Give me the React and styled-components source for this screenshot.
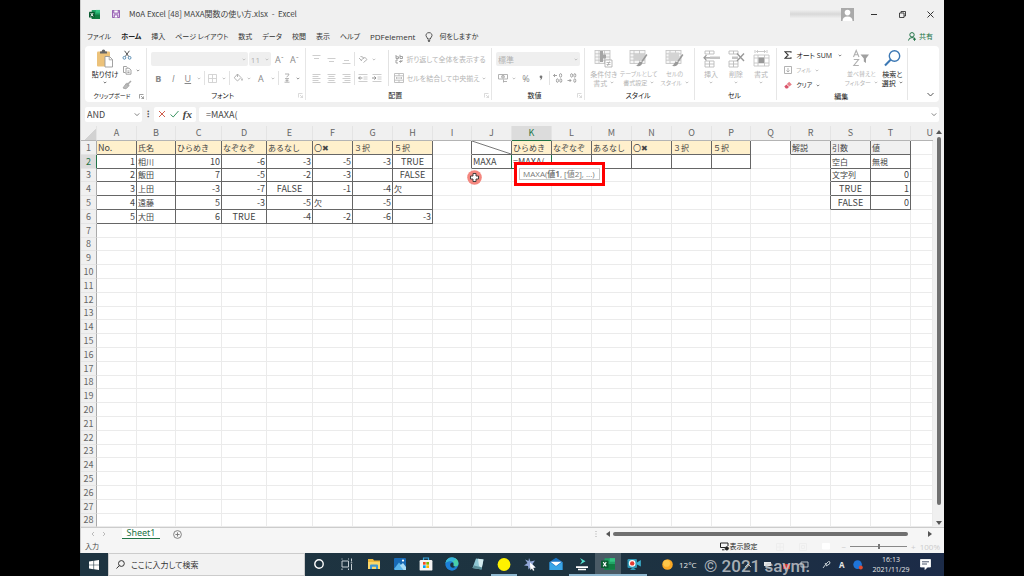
import React from "react"
import styled, { createGlobalStyle, css } from "styled-components"

const GlobalStyle = createGlobalStyle`
  * { box-sizing: border-box; }
  body {
    margin: 0;
    background: #000;
    font-family: "Open Sans", "Noto Sans CJK JP", sans-serif;
    font-size: 8px;
    line-height: 12px;
    color: #444;
    font-feature-settings: "palt";
  }
  button, input, select {
    font: inherit;
    font-feature-settings: inherit;
    color: inherit;
    background: none;
    border: 0;
    padding: 0;
    margin: 0;
  }
  svg { display: block; flex: none; }
`

const Screen = styled.div`
  min-height: 100vh;
  padding: 0 80px;
  display: flex;
  flex-direction: column;
  overflow: hidden;
`

const Window = styled.div`
  flex: 1;
  display: flex;
  flex-direction: column;
  background: #f0f0f0;
  border-left: 1px solid #ccc;
`

/* title bar */

const TitleBar = styled.header`
  display: flex;
  align-items: center;
  height: 28px;
  padding-left: 8px;
`

const SaveButton = styled.button`
  margin: 0 9px 0 12px;
`

const Title = styled.h1`
  margin: 0 auto 0 0;
  font-family: "Noto Sans CJK JP", sans-serif;
  font-size: 8px;
  font-weight: 400;
  white-space: pre;
`

const Account = styled.div`
  display: flex;
  align-items: center;
  margin-right: 6px;
`

const AccountName = styled.div`
  width: 51px;
  height: 8px;
  background: linear-gradient(#eee, #d8d8d8 50%, #eee);
`

const WindowButton = styled.button`
  display: flex;
  justify-content: center;
  align-items: center;
  width: 28px;
  height: 20px;
`

/* ribbon tabs */

const Tabs = styled.nav`
  display: flex;
  align-items: center;
  gap: 10px;
  height: 17px;
  padding: 0 11px 0 6px;
`

const Tab = styled.button`
  display: flex;
  align-items: center;
  gap: 6px;
  white-space: nowrap;
  font-size: ${p => (p.$latin ? 8 : 7)}px;
  font-weight: ${p => (p.$active ? 700 : 400)};
  color: ${p => (p.$active ? "#222" : "#333")};
`

const ShareButton = styled(Tab)`
  margin-left: auto;
  gap: 3px;
  color: #217346;
`

/* ribbon */

const Ribbon = styled.section`
  display: flex;
  height: 56px;
  margin: 1px 5px 0 4px;
  padding-top: 2px;
  background: #fff;
  border-radius: 4px;
  font-size: 7px;
  line-height: 9px;
`

const Group = styled.div`
  flex: ${p => p.$w} 1 ${p => p.$w}px;
  min-width: 0;
  display: flex;
  flex-direction: column;
  border-right: 1px solid #e6e6e6;
  margin-bottom: 2px;
`

const GroupBody = styled.div`
  flex: 1;
  display: flex;
  padding: 0 0 0 ${p => p.$pad || 4}px;
`

const GroupLabel = styled.div`
  display: flex;
  align-items: center;
  height: 10px;
  padding-right: 2px;
  font-size: ${p => (p.$small ? 6 : 7)}px;
  color: #222;

  span {
    flex: 1;
    text-align: center;
    white-space: nowrap;
  }
`

const ToolRows = styled.div`
  display: flex;
  flex-direction: column;
  gap: ${p => (p.$tight ? 1 : 5)}px;
  padding-top: ${p => (p.$tight ? 0 : 4)}px;
`

const ToolRow = styled.div`
  display: flex;
  align-items: center;
  height: 14px;
`

const Tool = styled.button`
  display: flex;
  align-items: center;
  justify-content: center;
  width: ${p => p.$w || 14}px;
  height: 14px;
  font-size: 9px;
  color: #888;
`

const TextTool = styled.button`
  display: flex;
  align-items: center;
  gap: ${p => (p.$wide ? 2 : 4)}px;
  height: 14px;
  white-space: nowrap;
  font-size: ${p => (p.$small ? 6 : 7)}px;
  color: ${p => (p.$on ? "#222" : "#b5b5b5")};
`

const CaretBox = styled.span`
  display: flex;
  justify-content: center;
  width: 8px;
`

const Divider = styled.span`
  width: 1px;
  height: 14px;
  margin: 0 1px;
  background: #e2e2e2;
`

const TallDivider = styled(Divider)`
  height: 36px;
  margin: 2px 2px 0 4px;
`

const SelectBox = styled.span`
  display: flex;
  align-items: center;
  width: ${p => p.$w}px;
  height: 14px;
  margin-right: 1px;
  background: #efefef;
  border-radius: 2px;

  select {
    flex: 1;
    min-width: 0;
    height: 14px;
    padding-left: 2px;
    appearance: none;
    color: #b0b0b0;
    font-size: 8px;
  }
`

const BigTool = styled.button`
  display: flex;
  flex-direction: column;
  align-items: center;
  width: ${p => p.$w}px;
  white-space: nowrap;
  padding-top: 1px;
  font-size: ${p => (p.$small ? 6 : 7)}px;
  color: ${p => (p.$on ? "#222" : "#b5b5b5")};

  svg:first-child { margin-bottom: 2px; }

  span {
    display: flex;
    align-items: center;
    justify-content: center;
    gap: 3px;
    height: 9px;
  }
`

const CollapseButton = styled.button`
  display: flex;
  justify-content: flex-end;
  align-items: flex-end;
  flex: none;
  width: 31px;
  padding: 0 4px 5px 0;
`

/* formula bar */

const FormulaBar = styled.div`
  display: flex;
  align-items: center;
  height: 24px;
  padding: 0 5px 0 4px;
  font-family: "Noto Sans CJK JP", sans-serif;
  font-size: 9px;
`

const Field = styled.div`
  display: flex;
  align-items: center;
  height: 15px;
  padding: 0 2px;
  background: #fff;
  border-radius: 2px;
  ${p => (p.$w ? `width: ${p.$w}px;` : "flex: 1;")}

  input {
    flex: 1;
    min-width: 0;
    height: 15px;
    padding-left: ${p => (p.$w ? 0 : 5)}px;
  }
`

const FormulaActions = styled(Field)`
  justify-content: space-around;
  margin-right: 3px;
`

const Grip = styled.span`
  width: 12px;
  text-align: center;
  font-weight: 700;
`

const Fx = styled.i`
  font-family: "Liberation Serif", serif;
  font-size: 11px;
  font-weight: 700;
`

/* sheet */

const SheetArea = styled.main`
  position: relative;
  display: flex;
  font-family: "Noto Sans CJK JP", sans-serif;
  font-feature-settings: normal;
`

const Sheet = styled.table`
  flex: 1;
  min-width: 0;
  table-layout: fixed;
  border-spacing: 0;
  background: #fff;
  font-size: 9px;
  line-height: 12px;

  tbody tr { height: 14px; }
  tbody tr:nth-child(5n + 3) { height: 13px; }
`

const ColHead = styled.th`
  height: 15px;
  padding: 0;
  font-weight: 400;
  color: ${p => (p.$active ? "#217346" : "#666")};
  background: ${p => (p.$active ? "#dcdcdc" : "#f0f0f0")};
  border-right: 1px solid #e4e4e4;
  border-bottom: 1px solid ${p => (p.$active ? "#217346" : "#b4b4b4")};

  &:last-child {
    text-align: right;
    border-right: 0;
  }
`

const Corner = styled(ColHead)`
  background: linear-gradient(to bottom right, #f0f0f0 60%, #d2d2d2 61%);
`

const RowHead = styled.th`
  padding: 0;
  font-weight: 400;
  color: ${p => (p.$active ? "#217346" : "#666")};
  background: ${p => (p.$active ? "#dcdcdc" : "#f0f0f0")};
  border-right: 1px solid ${p => (p.$active ? "#217346" : "#aaa")};
  border-bottom: 1px solid #e4e4e4;
`

const DARK = "#666"
const LIGHT = "#ebebeb"

const Cell = styled.td`
  position: relative;
  padding: 0 1px;
  white-space: nowrap;
  text-align: ${p => p.$align};
  font-size: ${p => (p.$kana ? 8 : 9)}px;
  background: ${p => p.$fill};
  border-right: 1px solid ${p => (p.$right ? DARK : LIGHT)};
  border-bottom: 1px solid ${p => (p.$bottom ? DARK : LIGHT)};
  ${p =>
    p.$active &&
    css`
      box-shadow: -1px 0 0 #217346;
      border-color: #217346;
    `}
`

const Diagonal = styled.svg`
  position: absolute;
  inset: 0;
  width: 100%;
  height: 100%;
`

const HintFrame = styled.div`
  position: absolute;
  left: 2px;
  top: 7px;
  z-index: 2;
  width: 91px;
  height: 24px;
  padding: 3px 2px;
  background: #fff;
  border: 3px solid #f00;
`

const Hint = styled.div`
  height: 12px;
  padding-left: 3px;
  border: 1px solid #c8c8c8;
  font-family: "Open Sans", "Noto Sans CJK JP", sans-serif;
  font-size: 8px;
  line-height: 10px;
  text-align: left;
  color: #777;
  font-feature-settings: "palt";
`

const Pointer = styled.div`
  position: absolute;
  left: 386px;
  top: 44px;
`

const VScroll = styled.div`
  display: flex;
  flex-direction: column;
  align-items: center;
  gap: 2px;
  width: 11px;
  padding: 3px 0 1px;

  i {
    width: 4px;
    height: 368px;
    margin-bottom: auto;
    border-radius: 2px;
    background: #707070;
  }
`

/* bottom bars */

const SheetTabs = styled.div`
  display: flex;
  align-items: center;
  height: 13px;
  padding: 0 11px 0 9px;
  background: #f6f6f6;
  border-top: 1px solid #ccc;
`

const SheetTab = styled.button`
  align-self: flex-start;
  width: 38px;
  height: 11px;
  margin: 0 13px 0 14px;
  line-height: 10px;
  font-family: "Noto Sans", sans-serif;
  font-size: 9px;
  color: #217346;
  background: #fff;
  border-bottom: 1px solid #217346;
`

const HScroll = styled.div`
  flex: none;
  display: flex;
  align-items: center;
  width: 338px;
  margin-left: auto;

  i {
    flex: 1;
    height: 4px;
    margin: 0 19px 0 2px;
    border-radius: 2px;
    background: #707070;
  }
`

const StatusBar = styled.footer`
  display: flex;
  align-items: center;
  flex: 1;
  min-height: 12px;
  padding: 0 4px;
  background: #f5f5f5;

  > span:first-child {
    margin-right: auto;
    font-size: 7px;
  }
`

const DisplaySettings = styled.button`
  display: flex;
  align-items: center;
  gap: 1px;
  font-size: 7px;
  color: #222;
`

const Views = styled.div`
  display: flex;
  justify-content: center;
  gap: 15px;
  width: 84px;
  padding-left: 6px;
`

const Zoom = styled.div`
  display: flex;
  align-items: center;
  gap: 4px;
  color: #ccc;

  input {
    appearance: none;
    width: 57px;
    height: 1px;
    background: #888;
  }
  input::-webkit-slider-thumb {
    appearance: none;
    width: 2px;
    height: 5px;
    background: #777;
  }
`

const Taskbar = styled.div`
  display: flex;
  height: 23px;
  background: linear-gradient(90deg, #1e3441, #1d3340 60%, #1c2b48);
  color: #e8e8e8;
`

const StartButton = styled.button`
  display: flex;
  align-items: center;
  justify-content: center;
  width: 28px;
`

const SearchBox = styled.label`
  display: flex;
  align-items: center;
  gap: 6px;
  width: 197px;
  padding-left: 7px;
  background: #f2f2f2;
  border: 1px solid #ccc;
  color: #333;

  input {
    flex: 1;
    min-width: 0;
  }
  input::placeholder { color: #333; opacity: 1; }
`

const TaskButton = styled.button`
  display: flex;
  align-items: center;
  justify-content: center;
  width: ${p => p.$w || 26}px;
  background: ${p => (p.$active ? "#4a5b66" : "transparent")};
  border-bottom: 2px solid ${p => (p.$open ? "#8fb8d0" : "transparent")};
`

const Tray = styled.div`
  position: relative;
  display: flex;
  align-items: center;
  margin-left: auto;
  padding-right: 13px;
`

const Weather = styled.span`
  display: flex;
  align-items: center;
  gap: 6px;
  width: 66px;
`

const TrayIcons = styled.span`
  display: flex;
  align-items: center;
  gap: 8px;
  width: 144px;
`

const Clock = styled.time`
  width: 38px;
  margin-right: 10px;
  font-size: 7px;
  line-height: 10px;
  text-align: center;
`

const Watermark = styled.div`
  position: absolute;
  left: 42px;
  top: 2px;
  font-family: Roboto, sans-serif;
  font-size: 17px;
  font-weight: 500;
  line-height: 23px;
  white-space: nowrap;
  color: rgba(205, 208, 212, 0.8);
`

/* icons */

const Icon = ({ s = 10, w, h, box, children, sw = 1, color = "#aaa" }) => (
  <svg
    width={w || s}
    height={h || s}
    viewBox={box || `0 0 ${w || s} ${h || s}`}
    fill="none"
    stroke={color}
    strokeWidth={sw}
  >
    {children}
  </svg>
)

const Down = ({ color = "#bbb" }) => (
  <Icon w={4} h={3} color={color} sw={0.9}>
    <path d="M0.7 0.8L2 2.1L3.3 0.8" />
  </Icon>
)

const Caret = ({ color }) => (
  <CaretBox>
    <Down color={color} />
  </CaretBox>
)

const Chevron = ({ w = 7, color = "#555" }) => (
  <Icon w={w} h={5} box="0 0 8 5" color={color}>
    <path d="M1 1L4 4L7 1" />
  </Icon>
)

const Launcher = ({ color = "#999" }) => (
  <Icon s={5} color={color} sw={0.7}>
    <path d="M0.5 4.5V0.5H4.5M2 2L4.5 4.5M4.6 2.3V4.6H2.3" />
  </Icon>
)

const ExcelLogo = ({ s = 11 }) => (
  <svg width={s} height={s} viewBox="0 0 12 12">
    <rect x="3" y="1" width="9" height="10" rx="0.6" fill="#21a366" />
    <path d="M7.5 1H12V4H7.5Z" fill="#33c481" />
    <path d="M3 6H12V10.4Q12 11 11.4 11H3Z" fill="#107c41" />
    <rect x="0" y="3" width="6.4" height="6.4" rx="0.5" fill="#0b5c31" />
    <path d="M1.9 4.4L4.5 8M4.5 4.4L1.9 8" stroke="#fff" strokeWidth="1" />
  </svg>
)

const Lines = ({ d }) => (
  <Icon s={9} color="#c8c8c8" sw={0.9}>
    <path d={d} />
  </Icon>
)

const Indent = ({ flip }) => (
  <Icon s={10} color="#c8c8c8" sw={0.9}>
    <path d="M0.5 1.5H9.5M5.5 4H9.5M5.5 6H9.5M0.5 8.5H9.5" />
    <path d={flip ? "M0 5H4M2.4 3.4L4 5L2.4 6.6" : "M4.4 5H0.6M2.2 3.4L0.6 5L2.2 6.6"} stroke="#888" />
  </Icon>
)

const Brush = () => (
  <g>
    <path d="M17.8 5.5L13 12.5" stroke="#999" strokeWidth="1.5" />
    <path d="M12.6 12.4Q9.6 12.6 8.6 15.4Q8 16.6 6.5 16.8Q12.5 18.4 13.6 13.2Z" fill="#999" stroke="none" />
  </g>
)

const GridArt = () => (
  <g stroke="#c0c0c0" strokeWidth="0.8">
    <rect x="1" y="1.5" width="15" height="13" fill="#f6f6f6" />
    <path d="M1 4.8H16M1 8H16M1 11.2H16M5 1.5V14.5M10.5 1.5V14.5" />
  </g>
)

const PersonPlus = ({ color }) => (
  <Icon w={8} h={9} color={color} sw={1}>
    <circle cx="4" cy="2.8" r="2.2" />
    <path d="M0.5 8.5Q0.8 5.6 4 5.6Q5.5 5.6 6 6.2M6.5 5.6V8.8M5 7.2H8" />
  </Icon>
)

/* data */

const COLS = "ABCDEFGHIJKLMNOPQRSTU".split("")
const WIDTHS = [16, 40, 39, 46, 45, 46, 40, 40, 40, 39, 40, 40, 40, 40, 40, 40, 39, 40, 40, 40, 40]
const ROWS = Array.from({ length: 28 }, (_, i) => i + 1)

const LINES = [
  ["A1", "No.", "氏名", "ひらめき", "なぞなぞ", "あるなし", "〇✖", "３択", "５択"],
  ["A2", 1, "相川", 10, -6, -3, -5, -3, true],
  ["A3", 2, "飯田", 7, -5, -2, -3, null, false],
  ["A4", 3, "上田", -3, -7, false, -1, -4, "欠"],
  ["A5", 4, "遠藤", 5, -3, -5, "欠", -5],
  ["A6", 5, "大田", 6, true, -4, -2, -6, -3],
  ["K1", "ひらめき", "なぞなぞ", "あるなし", "〇✖", "３択", "５択"],
  ["J2", "MAXA", "=MAXA("],
  ["R1", "解説", "引数", "値"],
  ["S2", "空白", "無視"],
  ["S3", "文字列", 0],
  ["S4", true, 1],
  ["S5", false, 0],
]

const values = {}
LINES.forEach(([start, ...items]) => {
  const col = COLS.indexOf(start[0])
  items.forEach((v, i) => {
    values[COLS[col + i] + start.slice(1)] = v
  })
})

// [first row, last row, first column, last column]
const BOXES = [
  [1, 6, 0, 7],
  [1, 2, 9, 15],
  [1, 1, 17, 17],
  [1, 5, 18, 19],
]

const boxed = (r, c) => BOXES.some(b => r >= b[0] && r <= b[1] && c >= b[2] && c <= b[3])

const fillOf = (r, c) => {
  if (r !== 1) return "#fff"
  if (c <= 7 || (c >= 10 && c <= 15)) return "#fff0cc"
  return c >= 17 && c <= 19 ? "#f0f0f0" : "#fff"
}

const alignOf = v => {
  if (typeof v === "boolean") return "center"
  return typeof v === "number" ? "right" : "left"
}

const textOf = v => (typeof v === "boolean" ? String(v).toUpperCase() : v)

const SheetCell = ({ r, c }) => {
  const name = COLS[c] + r
  const v = values[name]
  return (
    <Cell
      $align={alignOf(v)}
      $kana={typeof v === "string" && !/^[\x00-\x7f]+$/.test(v)}
      $fill={fillOf(r, c)}
      $right={boxed(r, c) || boxed(r, c + 1)}
      $bottom={boxed(r, c) || boxed(r + 1, c)}
      $active={name === "K2"}
    >
      {textOf(v)}
      {name === "J1" && (
        <Diagonal viewBox="0 0 39 13" preserveAspectRatio="none">
          <path d="M0 0L39 13" stroke="#555" strokeWidth="0.8" />
        </Diagonal>
      )}
      {name === "K2" && (
        <HintFrame>
          <Hint>
            MAXA(<b>値1</b>, [値2], ...)
          </Hint>
        </HintFrame>
      )}
    </Cell>
  )
}

const Grid = () => (
  <Sheet>
    <colgroup>
      {WIDTHS.map((w, i) => (
        <col key={i} width={w} />
      ))}
      <col />
    </colgroup>
    <thead>
      <tr>
        <Corner />
        {COLS.map(c => (
          <ColHead key={c} $active={c === "K"}>
            {c}
          </ColHead>
        ))}
      </tr>
    </thead>
    <tbody>
      {ROWS.map(r => (
        <tr key={r}>
          <RowHead $active={r === 2}>{r}</RowHead>
          {COLS.map((c, i) => (
            <SheetCell key={c} r={r} c={i} />
          ))}
        </tr>
      ))}
    </tbody>
  </Sheet>
)

const RibbonGroup = ({ w, label, pad, small, launcher, children }) => (
  <Group $w={w}>
    <GroupBody $pad={pad}>{children}</GroupBody>
    <GroupLabel $small={small}>
      <span>{label}</span>
      {launcher && <Launcher color={launcher} />}
    </GroupLabel>
  </Group>
)

const ClipboardGroup = () => (
  <RibbonGroup w={62} label="クリップボード" pad={5} small launcher="#777">
    <BigTool $w={30} $on>
      <svg width="18" height="19" viewBox="0 0 18 19">
        <rect x="1" y="2.5" width="13" height="15" rx="1" fill="#ecc27a" />
        <path d="M4 4.5V2.5H5.6Q5.8 0.6 7.5 0.6T9.4 2.5H11V4.5Z" fill="#666" />
        <path d="M9 7.5H13.5L16.5 10.5V18H9Z" fill="#fff" stroke="#999" strokeWidth="0.9" />
        <path d="M13.2 7.5V10.8H16.5" fill="none" stroke="#999" strokeWidth="0.8" />
      </svg>
      <span>貼り付け</span>
      <span>
        <Down color="#666" />
      </span>
    </BigTool>
    <ToolRows $tight>
      <ToolRow>
        <Tool aria-label="切り取り">
          <Icon s={10} color="#555">
            <path d="M2.6 0.8L6.8 6.6M7.4 0.8L3.2 6.6" />
            <circle cx="2.4" cy="7.8" r="1.4" stroke="#5b8fb5" />
            <circle cx="7.6" cy="7.8" r="1.4" stroke="#5b8fb5" />
          </Icon>
        </Tool>
      </ToolRow>
      <ToolRow>
        <Tool aria-label="コピー">
          <Icon s={10} color="#999" sw={0.9}>
            <path d="M1.5 1.5H4.5L5.5 2.5M1.5 1.5V7.5H3.5M4 3.2H7L9 5V9.2H4ZM5.4 6H7.5M5.4 7.5H7.5" />
          </Icon>
        </Tool>
        <Caret color="#888" />
      </ToolRow>
      <ToolRow>
        <Tool aria-label="書式のコピー">
          <Icon s={10} color="#aaa">
            <path d="M9 1L6 4M4.5 3L7.2 5.7" strokeWidth="1.5" />
            <path d="M4 3.8L6.5 6.3L4 8.8L1 8Z" fill="#bbb" />
          </Icon>
        </Tool>
      </ToolRow>
    </ToolRows>
  </RibbonGroup>
)

const FontGroup = () => (
  <RibbonGroup w={160} label="フォント" launcher="#ccc">
    <ToolRows>
      <ToolRow>
        <SelectBox $w={97}>
          <select aria-label="フォント">
            <option></option>
          </select>
          <Caret />
        </SelectBox>
        <SelectBox $w={22}>
          <select aria-label="サイズ">
            <option>11</option>
          </select>
          <Caret />
        </SelectBox>
        <Tool $w={15}>A<sup>ˆ</sup></Tool>
        <Tool $w={15}>A<sup>ˇ</sup></Tool>
      </ToolRow>
      <ToolRow>
        <Tool $w={15}><b>B</b></Tool>
        <Tool $w={15}><i>I</i></Tool>
        <Tool><u>U</u></Tool>
        <Caret />
        <Divider />
        <Tool aria-label="罫線">
          <Icon s={9} color="#d0d0d0" sw={0.9}>
            <path d="M0.5 0.5H8.5V8.5H0.5ZM4.5 0.5V8.5M0.5 4.5H8.5" />
          </Icon>
        </Tool>
        <Caret />
        <Divider />
        <Tool aria-label="塗りつぶし">
          <Icon s={10} color="#aaa" sw={0.9}>
            <path d="M4.5 1L8 4.5L4.5 8L1.2 4.8ZM4.5 1V4" />
            <path d="M9 5.5V7.5" strokeWidth="1.4" />
          </Icon>
        </Tool>
        <Caret />
        <Tool $w={16}>A</Tool>
        <Caret />
        <Divider />
        <Tool aria-label="ふりがな">
          <Icon w={8} h={10} color="#aaa" sw={0.9}>
            <path d="M2 1H6Q5.8 3 3.5 4M2 5.6H6M2.5 7.4H5.5M1.5 9.2H6.5M4 5.6V9" />
          </Icon>
        </Tool>
        <Caret color="#888" />
      </ToolRow>
    </ToolRows>
  </RibbonGroup>
)

const AlignGroup = () => (
  <RibbonGroup w={186} label="配置" pad={3} launcher="#ccc">
    <ToolRows>
      <ToolRow>
        <Tool $w={15} aria-label="上揃え"><Lines d="M0.5 0.5H8.5M2 3.5H7" /></Tool>
        <Tool $w={15} aria-label="上下中央"><Lines d="M0.5 3.5H8.5M2 6.5H7" /></Tool>
        <Tool aria-label="下揃え"><Lines d="M2 5.5H7M0.5 8.5H8.5" /></Tool>
        <Divider />
        <Tool aria-label="方向">
          <Icon s={10} color="#aaa" sw={0.9}>
            <path d="M1 4L4 7M2.5 2.5Q5 2 6 5M5.5 8.5L9 5.5M9 5.5L6.5 3L3 6.5" />
          </Icon>
        </Tool>
        <Caret />
      </ToolRow>
      <ToolRow>
        <Tool $w={15} aria-label="左揃え"><Lines d="M0.5 0.5H8.5M0.5 2.5H6.5M0.5 4.5H8.5M0.5 6.5H6.5M0.5 8.5H8.5" /></Tool>
        <Tool $w={15} aria-label="中央揃え"><Lines d="M0.5 0.5H8.5M1.5 2.5H7.5M0.5 4.5H8.5M1.5 6.5H7.5M0.5 8.5H8.5" /></Tool>
        <Tool aria-label="右揃え"><Lines d="M0.5 0.5H8.5M2.5 2.5H8.5M0.5 4.5H8.5M2.5 6.5H8.5M0.5 8.5H8.5" /></Tool>
        <Divider />
        <Tool aria-label="インデントを減らす"><Indent /></Tool>
        <Tool aria-label="インデントを増やす"><Indent flip /></Tool>
      </ToolRow>
    </ToolRows>
    <TallDivider />
    <ToolRows>
      <ToolRow>
        <TextTool $wide>
          <Icon w={13} h={10} color="#999" sw={0.9}>
            <path d="M5 1V4.5H7.5V2.8H5M9 0.8V4.5H11.5V2.5H9M7 6H5V9H7M11 6V7.5H8.5M9.7 6.3L8.5 7.5L9.7 8.7" />
          </Icon>
          折り返して全体を表示する
        </TextTool>
      </ToolRow>
      <ToolRow>
        <TextTool $wide>
          <Icon w={13} h={10} color="#bbb" sw={0.9}>
            <path d="M3.5 0.5H12.5V9.5H3.5ZM3.5 2.8H12.5M3.5 7.2H12.5M8 0.5V2.8M8 7.2V9.5M5 5H11M6 4L5 5L6 6M10 4L11 5L10 6" />
          </Icon>
          セルを結合して中央揃え
        </TextTool>
        <Caret />
      </ToolRow>
    </ToolRows>
  </RibbonGroup>
)

const NumberGroup = () => (
  <RibbonGroup w={93} label="数値" launcher="#ccc">
    <ToolRows>
      <ToolRow>
        <SelectBox $w={84}>
          <select aria-label="表示形式">
            <option>標準</option>
          </select>
          <Caret />
        </SelectBox>
      </ToolRow>
      <ToolRow>
        <Tool aria-label="通貨">
          <Icon s={10} color="#aaa" sw={0.9}>
            <path d="M0.5 1.5H9.5V6H0.5ZM3.5 3.8H6.5M5 8.5H9M5.5 6.5V9.5" />
            <circle cx="5" cy="3.7" r="1.4" />
          </Icon>
        </Tool>
        <Caret />
        <Tool $w={16}>%</Tool>
        <Tool aria-label="桁区切り">
          <Icon w={4} h={6}>
            <path d="M0.6 1.8A1.3 1.3 0 0 1 3.4 1.8Q3.4 4.2 1 5.4Q1.8 4.2 1.8 3.2Q0.6 3 0.6 1.8Z" fill="#777" stroke="none" />
          </Icon>
        </Tool>
        <Divider />
        {["M0.5 2.5H4M2 1L0.5 2.5L2 4", "M0.5 7.5H4M2.6 6L4 7.5L2.6 9"].map((d, i) => (
          <Tool key={d} aria-label={i ? "桁下げ" : "桁上げ"}>
            <Icon s={10} color="#999" sw={0.9}>
              <path d={d} />
              {i === 0 && <ellipse cx="7.6" cy="2.4" rx="1.1" ry="1.8" />}
              <ellipse cx={i ? 4.6 : 4.4} cy={i ? 2.4 : 7.6} rx="1" ry="1.8" />
              <ellipse cx="7.8" cy="7.6" rx="1" ry="1.8" />
              {i === 1 && <ellipse cx="7.8" cy="2.4" rx="1" ry="1.8" />}
            </Icon>
          </Tool>
        ))}
      </ToolRow>
    </ToolRows>
  </RibbonGroup>
)

const StyleGroup = () => (
  <RibbonGroup w={110} label="スタイル" pad={1}>
    <BigTool $w={36}>
      <Icon s={19}>
        <GridArt />
        <path d="M6 2H9V5.5H12V9.5H9V13H6Z" fill="#a5a5a5" stroke="none" />
        <path d="M11 11H18V18H11ZM12.5 13.5H16.5M12.5 15.5H16.5M15.5 12.5L13.5 17" fill="#fff" strokeWidth="0.8" />
      </Icon>
      <span>条件付き</span>
      <span>書式 <Down /></span>
    </BigTool>
    <BigTool $w={34} $small>
      <Icon s={19}>
        <GridArt />
        <path d="M5 4.8H16V11.2H5Z" fill="#d0d0d0" stroke="none" />
        <Brush />
      </Icon>
      <span>テーブルとして</span>
      <span>書式設定 <Down /></span>
    </BigTool>
    <BigTool $w={38} $small>
      <Icon s={19}>
        <GridArt />
        <path d="M3.5 3.5H14V12H3.5Z" fill="#d4d4d4" stroke="none" />
        <Brush />
      </Icon>
      <span>セルの</span>
      <span>スタイル <Down /></span>
    </BigTool>
  </RibbonGroup>
)

const CellsGroup = () => (
  <RibbonGroup w={83} label="セル">
    <BigTool $w={25}>
      <Icon s={19} sw={0.9}>
        <path d="M3 2H12V5H3ZM7.5 2V5M3 12H12V18H3ZM7.5 12V18M3 15H12" stroke="#bbb" />
        <path d="M8 7.5H18V10H8Z" fill="#c4c4c4" stroke="none" />
        <path d="M8 8.8H2M4.5 6.2L2 8.8L4.5 11.4" stroke="#999" strokeWidth="1.2" />
      </Icon>
      <span>挿入</span>
      <span><Down /></span>
    </BigTool>
    <BigTool $w={25}>
      <Icon s={19} sw={0.9}>
        <path d="M2 2H11V5H2ZM6.5 2V5M2 12H11V18H2ZM6.5 12V18M2 15H11" stroke="#bbb" />
        <path d="M5 7.5H11V10H5Z" fill="#c4c4c4" stroke="none" />
        <path d="M10 4.5L17 12M17 4.5L10 12" stroke="#999" strokeWidth="1.4" />
      </Icon>
      <span>削除</span>
      <span><Down /></span>
    </BigTool>
    <BigTool $w={25}>
      <Icon s={19} sw={0.9} color="#c4c4c4">
        <path d="M3 1V4M15 1V4M4.5 2.5H13.5M6 1.2L4.5 2.5L6 3.8M12 1.2L13.5 2.5L12 3.8M2 6H17V17H2ZM6 6V17M12.5 6V17M2 9H17M2 14H17" />
        <path d="M6.5 8.5H12V14H6.5Z" fill="#999" stroke="none" />
      </Icon>
      <span>書式</span>
      <span><Down /></span>
    </BigTool>
  </RibbonGroup>
)

const EditRows = styled(ToolRows)`
  width: 60px;
`

const EditGroup = () => (
  <RibbonGroup w={131} label="編集" pad={7}>
    <EditRows $tight>
      <TextTool $on>
        <Icon s={8} color="#333" sw={1.1}>
          <path d="M7 1.8V0.8H1L4.2 4L1 7.3H7V6.2" />
        </Icon>
        オート SUM <Caret color="#777" />
      </TextTool>
      <TextTool $small>
        <Icon s={8} color="#aaa" sw={0.9}>
          <path d="M0.5 0.5H7.5V7.5H0.5ZM4 2V6M2.4 4.5L4 6L5.6 4.5" />
        </Icon>
        フィル <Down />
      </TextTool>
      <TextTool $on $small>
        <svg width="8" height="8" viewBox="0 0 8 8">
          <path d="M5.2 0.8L7.8 3.4L5.4 5.6L2.8 3Z" fill="#e8808a" />
          <path d="M2.4 3.4L5 6L3.4 7.4H1.8L0.3 5.6Z" fill="#d9536a" />
        </svg>
        クリア <Down color="#777" />
      </TextTool>
    </EditRows>
    <BigTool $w={34} $small>
      <Icon w={18} h={19} color="#b0b0b0" sw={1.1}>
        <path d="M1.5 8L4.2 1.5L7 8M2.5 5.8H6M1.8 10.5H6.6L1.8 16.5H6.8" />
        <path d="M8.5 5.5H17L14 9.5V14L11.8 12.5V9.5Z" fill="#a0a0a0" stroke="none" />
      </Icon>
      <span>並べ替えと</span>
      <span>フィルター <Down /></span>
    </BigTool>
    <BigTool $w={28} $on>
      <Icon s={19} color="#3c78b4" sw={1.4}>
        <circle cx="11.5" cy="7" r="5.2" />
        <path d="M7.6 10.8L2 16.5" strokeWidth="2" />
      </Icon>
      <span>検索と</span>
      <span>選択 <Down color="#777" /></span>
    </BigTool>
  </RibbonGroup>
)

const TABS = ["ファイル", "ホーム", "挿入", "ページ レイアウト", "数式", "データ", "校閲", "表示", "ヘルプ", "PDFelement"]

const Triangle = ({ d, w = 6, h = 6 }) => (
  <svg width={w} height={h} viewBox="0 0 6 6">
    <path d={d} fill="#555" />
  </svg>
)

const TASKS = [
  {
    label: "Cortana",
    w: 28,
    art: <circle cx="7" cy="7" r="4.2" fill="none" stroke="#fff" strokeWidth="1.4" />,
  },
  {
    label: "タスク ビュー",
    w: 28,
    art: <path d="M2 2.5V1.5M2 4H8.5V10H2ZM2 11.5V13M8.5 11.5V13M8.5 1.5V2.5M11.5 1.5V4.5M11.5 7V13M10.7 5.8H12.3" fill="none" stroke="#c5ced3" strokeWidth="1" />,
  },
  {
    label: "エクスプローラー",
    art: (
      <>
        <path d="M1 2H6L7 3.5H13V12H1Z" fill="#f0b93a" />
        <path d="M1 5H13V12H1Z" fill="#fbd769" />
        <path d="M3 12V8.5Q3 7.5 4 7.5H10Q11 7.5 11 8.5V12H9V9.8H5V12Z" fill="#3f97d3" />
      </>
    ),
  },
  {
    label: "フォト",
    art: (
      <>
        <rect x="1" y="1" width="12" height="12" rx="1" fill="#1769b5" />
        <path d="M1 12L6 5.5L13 13H2Z" fill="#58b4ea" />
        <path d="M7 8.5L10 6L13 10V13H10.5Z" fill="#a9dcf7" />
        <circle cx="10" cy="3.6" r="1.1" fill="#fff" />
      </>
    ),
  },
  {
    label: "Microsoft Store",
    art: (
      <>
        <path d="M4.5 3.5V1H9.5V3.5" fill="none" stroke="#37a5dd" strokeWidth="1.2" />
        <rect x="0.6" y="3" width="12.8" height="10.6" rx="1.2" fill="#f4f4f4" />
        <path d="M4 5H6.7V7.7H4Z" fill="#f25022" />
        <path d="M7.3 5H10V7.7H7.3Z" fill="#7fba00" />
        <path d="M4 8.3H6.7V11H4Z" fill="#00a4ef" />
        <path d="M7.3 8.3H10V11H7.3Z" fill="#ffb900" />
      </>
    ),
  },
  {
    label: "Microsoft Edge",
    art: (
      <>
        <circle cx="7" cy="7" r="6.5" fill="#1b7fd0" />
        <path d="M0.6 6Q1.5 0.5 7 0.5Q13.4 0.8 13.5 6.5Q13.3 9.5 10 9.5Q8.2 9.4 8.4 8.2Q9.6 6 7.4 4.6Q3.8 3.2 0.6 6Z" fill="#49cfa8" />
        <path d="M0.6 6Q1.5 0.5 7 0.5Q9.5 0.5 11 1.8Q9 4.2 7.4 4.6Q3.8 3.2 0.6 6Z" fill="#38b4dc" />
        <path d="M0.6 6Q3.5 3.5 7 4.4Q4.6 5.6 5 8.6Q6 12.4 11.5 11.6Q9 14 5.5 13.3Q0 11.5 0.6 6Z" fill="#1c7fd6" />
        <path d="M5.2 7.5Q5.5 5.2 7.6 5.4Q9 6.5 8.3 8.2Q8.2 9.6 10.4 9.7Q8 11.4 6 10Q5 9 5.2 7.5Z" fill="#1d3340" />
      </>
    ),
  },
  {
    label: "メモ帳",
    art: (
      <>
        <path d="M5 1.5L12.5 2.5L10.5 12.5L1.5 11Z" fill="#8fc6d4" />
        <path d="M7 1.8L12.5 2.5L10.8 11L8 9Z" fill="#d6ecef" />
        <path d="M1.5 11L10.5 12.5L11 10.5L3 8.5Z" fill="#5c8f9a" />
      </>
    ),
  },
  { label: "ペン", open: true, art: <circle cx="7" cy="7.5" r="6.4" fill="#fff200" /> },
  {
    label: "ポインター",
    art: (
      <>
        <path d="M6 1L7.5 4.5L12 3.5L9.5 7L12 11L8 9.8L5.5 12.5L5 9L1 8.5L4.5 6L2 2.5L5.5 4Z" fill="#93a8d8" />
        <path d="M7 5.5L12.8 10.5L10.2 10.8L11.4 13.2L10 13.8L9 11.4L7.3 13Z" fill="#fff" />
      </>
    ),
  },
  {
    label: "メール",
    art: (
      <>
        <path d="M0.5 5L7 0.8L13.5 5V13H0.5Z" fill="#1b75c4" />
        <path d="M1.5 4.8H12.5L7 9Z" fill="#fff" />
        <path d="M0.5 5L7 9.5L13.5 5V13H0.5Z" fill="#39a5e6" />
      </>
    ),
  },
  {
    label: "Filmora",
    open: true,
    art: (
      <>
        <path d="M5 1L10.5 4.2L5 7.5L7 4.2Z" fill="#55e0cf" />
        <path d="M1 9.2H13V11H1ZM3 11.8H11V13.2H3Z" fill="#fff" />
      </>
    ),
  },
  { label: "Excel", open: true, active: true },
  {
    label: "録画",
    open: true,
    art: (
      <>
        <rect x="0.5" y="2" width="9.5" height="9" rx="1.2" fill="#2f9ab8" />
        <path d="M10 5.5L13.8 3V9.5L10 7.5Z" fill="#3cb4d2" />
        <circle cx="5.2" cy="6.4" r="3.3" fill="#fff" />
        <circle cx="5.2" cy="6.4" r="2.2" fill="#e23a30" />
        <path d="M3 13L5 11H7L9 13Z" fill="#2f9ab8" />
      </>
    ),
  },
]

const App = () => (
  <Screen>
    <GlobalStyle />
    <Window>
      <TitleBar>
        <ExcelLogo />
        <SaveButton aria-label="上書き保存">
          <Icon s={8} box="0 0 9 9" color="#8a4ba8">
            <path d="M0.5 0.5H8.5V8.5H0.5Z" fill="#e9dcf2" />
            <path d="M2 0.5V3.5H7V0.5M2.5 8.5V5.5H6.5V8.5" fill="#fff" />
          </Icon>
        </SaveButton>
        <Title>MoA Excel [48] MAXA関数の使い方.xlsx  -  Excel</Title>
        <Account>
          <AccountName />
          <svg width="13" height="13" viewBox="0 0 13 13">
            <rect width="13" height="13" fill="#aaa" />
            <circle cx="6.5" cy="4.6" r="2.8" fill="#fff" />
            <path d="M1.5 13Q1.5 8.4 6.5 8.4T11.5 13Z" fill="#fff" />
          </svg>
        </Account>
        <WindowButton aria-label="最小化">
          <Icon s={6} color="#333"><path d="M0 3.5H6" /></Icon>
        </WindowButton>
        <WindowButton aria-label="元に戻す">
          <Icon s={7} color="#333" sw={0.9}>
            <path d="M0.5 2H5V6.5H0.5ZM2 2V0.5H6.5V5H5" />
          </Icon>
        </WindowButton>
        <WindowButton aria-label="閉じる">
          <Icon s={7} color="#333"><path d="M0.5 0.5L6.5 6.5M6.5 0.5L0.5 6.5" /></Icon>
        </WindowButton>
      </TitleBar>

      <Tabs>
        {TABS.map(t => (
          <Tab key={t} $active={t === "ホーム"} $latin={t === "PDFelement"}>
            {t}
          </Tab>
        ))}
        <Tab>
          <Icon w={8} h={10} color="#444" sw={0.9}>
            <path d="M2.6 7Q2.6 6 1.6 5Q0.6 3.6 1.2 2.2Q2.2 0.6 4 0.6T6.8 2.2Q7.4 3.6 6.4 5Q5.4 6 5.4 7ZM2.8 8.4H5.2M3.2 9.5H4.8" />
          </Icon>
          何をしますか
        </Tab>
        <ShareButton>
          <PersonPlus color="#217346" />
          共有
        </ShareButton>
      </Tabs>

      <Ribbon>
        <ClipboardGroup />
        <FontGroup />
        <AlignGroup />
        <NumberGroup />
        <StyleGroup />
        <CellsGroup />
        <EditGroup />
        <CollapseButton aria-label="リボンを折りたたむ">
          <Chevron w={9} />
        </CollapseButton>
      </Ribbon>

      <FormulaBar>
        <Field $w={57}>
          <input aria-label="名前ボックス" defaultValue="AND" />
          <Chevron w={6} />
        </Field>
        <Grip>⁝</Grip>
        <FormulaActions $w={42}>
          <Icon s={8} color="#d0604e"><path d="M1 1L7 7M7 1L1 7" /></Icon>
          <Icon w={9} h={8} color="#3d9564"><path d="M0.5 4.5L3.2 7L8.5 1" /></Icon>
          <Fx>fx</Fx>
        </FormulaActions>
        <Field>
          <input aria-label="数式バー" defaultValue="=MAXA(" />
          <Chevron w={6} />
        </Field>
      </FormulaBar>

      <SheetArea>
        <Grid />
        <VScroll>
          <Triangle d="M3 1L6 5H0Z" />
          <i />
          <Triangle d="M0 1H6L3 5Z" />
        </VScroll>
        <Pointer>
          <svg width="15" height="15" viewBox="0 0 15 15">
            <circle cx="7.5" cy="7.5" r="7.3" fill="#f4877f" />
            <path d="M6 3.5H9V6H11.5V9H9V11.5H6V9H3.5V6H6Z" fill="#fff" stroke="#333" strokeWidth="0.9" />
          </svg>
        </Pointer>
      </SheetArea>

      <SheetTabs>
        <Icon w={18} h={6} color="#bbb">
          <path d="M4 1L2 3L4 5M13 1L15 3L13 5" />
        </Icon>
        <SheetTab>Sheet1</SheetTab>
        <Icon s={9} color="#777" sw={0.9}>
          <circle cx="4.5" cy="4.5" r="3.9" />
          <path d="M4.5 2.4V6.6M2.4 4.5H6.6" />
        </Icon>
        <HScroll>
          <Icon w={10} h={6} color="#aaa"><path d="M1 0V1M1 2.5V3.5M1 5V6" /></Icon>
          <Triangle d="M5 0V6L1 3Z" />
          <i />
          <Triangle d="M1 0V6L5 3Z" />
        </HScroll>
      </SheetTabs>
      <StatusBar>
        <span>入力</span>
        <DisplaySettings>
          <Icon s={9} color="#222">
            <path d="M0.5 1H8M0.5 1V5.5H5M8 1V4M2 7.8H4.5" />
            <circle cx="6.8" cy="6.4" r="1.6" fill="#222" />
          </Icon>
          表示設定
        </DisplaySettings>
        <Views>
          <Icon s={8} color="#eee"><path d="M0.5 0.5H7.5V7.5H0.5ZM4 0.5V7.5M0.5 4H7.5" /></Icon>
          <Icon s={8} color="#eee"><path d="M0.5 0.5H7.5V7.5H0.5ZM2.5 2.5H5.5V5.5H2.5Z" /></Icon>
          <Icon s={8} color="#fff"><path d="M0.5 0.5H7.5V6H0.5Z" fill="#fff" /></Icon>
        </Views>
        <Zoom>
          −
          <input type="range" aria-label="ズーム" />
          + <span>100%</span>
        </Zoom>
      </StatusBar>
    </Window>

    <Taskbar>
      <StartButton aria-label="スタート">
        <svg width="10" height="10" viewBox="0 0 10 10">
          <path d="M0 1.4L4.5 0.8V4.7H0ZM5.1 0.7L10 0V4.7H5.1ZM0 5.3H4.5V9.2L0 8.6ZM5.1 5.3H10V10L5.1 9.3Z" fill="#fff" />
        </svg>
      </StartButton>
      <SearchBox>
        <Icon s={9} color="#333">
          <circle cx="5.4" cy="3.5" r="2.9" />
          <path d="M3.3 5.6L0.5 8.5" />
        </Icon>
        <input aria-label="検索" placeholder="ここに入力して検索" />
      </SearchBox>
      {TASKS.map(t => (
        <TaskButton key={t.label} aria-label={t.label} $w={t.w} $open={t.open} $active={t.active}>
          {t.art ? (
            <svg width="14" height="14" viewBox="0 0 14 14">
              {t.art}
            </svg>
          ) : (
            <ExcelLogo s={14} />
          )}
        </TaskButton>
      ))}
      <Tray>
        <Weather>
          <svg width="11" height="11" viewBox="0 0 11 11">
            <circle cx="5.5" cy="5.5" r="5.3" fill="#f9a825" />
            <circle cx="4.6" cy="4.4" r="3.4" fill="#fdc64a" />
          </svg>
          12°C
        </Weather>
        <TrayIcons>
          <Icon w={86} h={10} color="#c5ced3" sw={0.9}>
            <path d="M17 7L20 4L23 7M38 2V8H42M42 3H38" />
            <path d="M36 2H43V6H36Z" fill="#e4e8ea" stroke="none" />
            <path d="M55 4H62V9H55Z" fill="#d0312d" stroke="none" />
            <path d="M73 2H80V7H73Z" />
          </Icon>
          <Icon s={9} color="#c5ced3"><path d="M1 8L4 4Q7 0 8 2T4 6M3 3L5 6" /></Icon>
          <b>A</b>
          <svg width="10" height="10" viewBox="0 0 10 10">
            <circle cx="4.6" cy="4.6" r="4.3" fill="#1f74d8" />
            <circle cx="7.8" cy="7.6" r="2" fill="#e04a2f" />
          </svg>
        </TrayIcons>
        <Clock>
          16:13
          <br />
          2021/11/29
        </Clock>
        <Icon s={11} color="#fff" sw={0.8}>
          <path d="M0.5 0.5H10.5V8H7.5L5 10.5V8H0.5Z" fill="#fff" />
          <path d="M2 2.8H9M2 5H7" stroke="#1c2b48" />
        </Icon>
        <Watermark>© 2021 saym.</Watermark>
      </Tray>
    </Taskbar>
  </Screen>
)

export default App
